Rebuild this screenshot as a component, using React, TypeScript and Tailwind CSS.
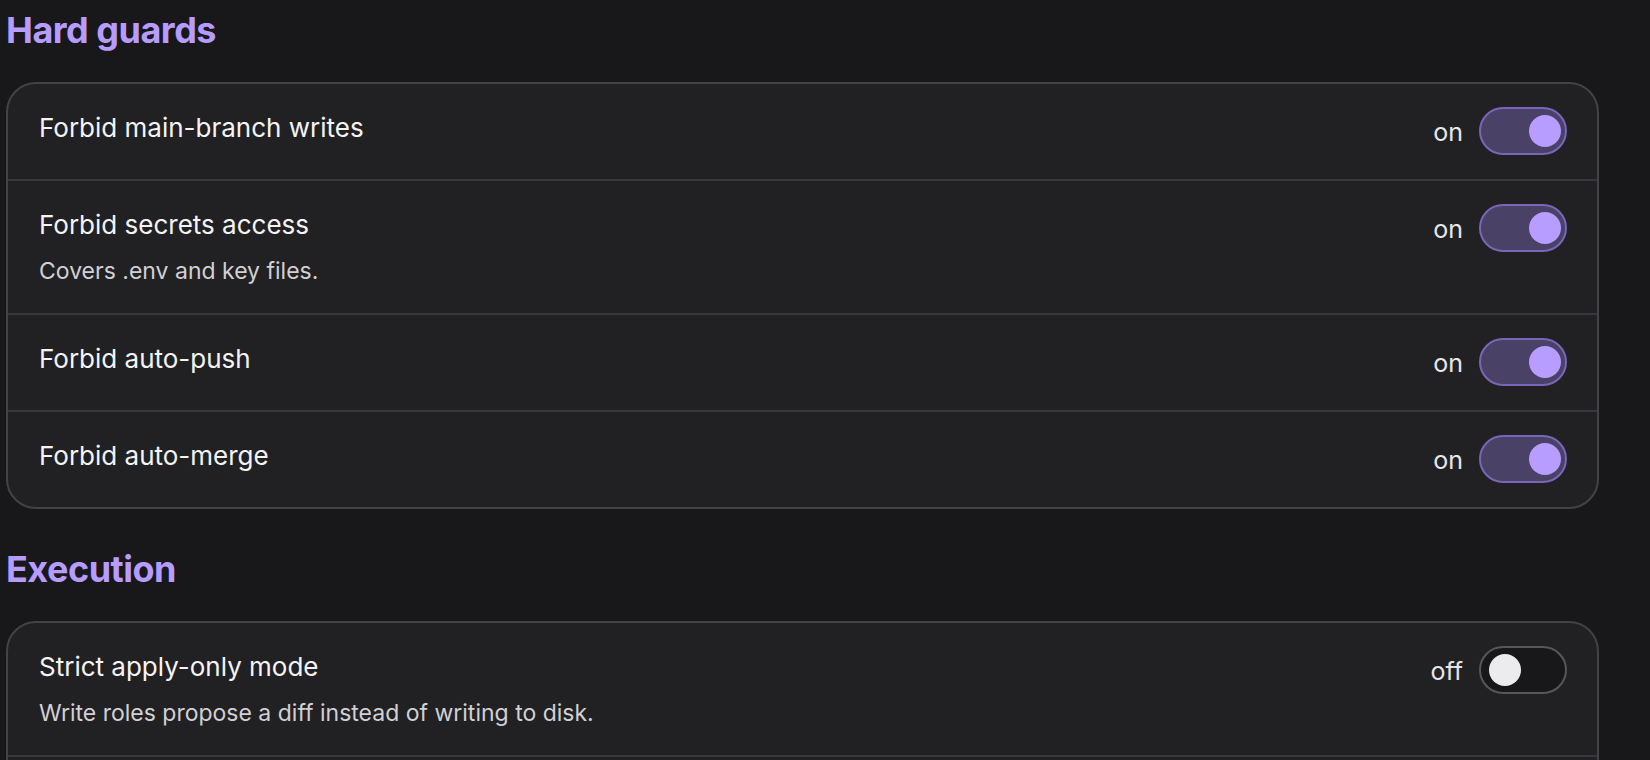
import React, { useState } from 'react';

type Setting = {
  id: string;
  label: string;
  hint?: string;
  on: boolean;
};

const HARD_GUARDS: Setting[] = [
  { id: 'main-writes', label: 'Forbid main-branch writes', on: true },
  { id: 'secrets', label: 'Forbid secrets access', hint: 'Covers .env and key files.', on: true },
  { id: 'auto-push', label: 'Forbid auto-push', on: true },
  { id: 'auto-merge', label: 'Forbid auto-merge', on: true },
];

const EXECUTION: Setting[] = [
  { id: 'apply-only', label: 'Strict apply-only mode', hint: 'Write roles propose a diff instead of writing to disk.', on: false },
  { id: 'dry-run', label: 'Dry-run shell commands', on: false },
];

const Toggle: React.FC<{ on: boolean; onChange: () => void }> = ({ on, onChange }) => (
  <div className="flex items-center gap-4 shrink-0">
    <span className="text-[25px] leading-none text-[#e6e6ea] w-[34px] text-right pt-[3px]">{on ? 'on' : 'off'}</span>
    <button
      type="button"
      onClick={onChange}
      className={
        'relative w-[88px] h-[48px] rounded-full border-2 ' +
        (on ? 'bg-[#4a4166] border-[#7a66b9]' : 'bg-[#18181b] border-[#56565b]')
      }
    >
      <span
        className={
          'absolute top-[6px] w-[32px] h-[32px] rounded-full ' +
          (on ? 'left-[48px] bg-[#b79dff]' : 'left-[8px] bg-[#ececef]')
        }
      />
    </button>
  </div>
);

const Section: React.FC<{ title: string; items: Setting[] }> = ({ title, items }) => {
  const [state, setState] = useState(items);

  return (
    <section>
      <h2 className="text-[36px] leading-[40px] font-bold text-[#b69cff] tracking-[-0.5px]">{title}</h2>
      <div className="mt-8 rounded-[30px] border-2 border-[#434347] bg-[#212123] divide-y-2 divide-[#37373b] overflow-hidden">
        {state.map((s, i) => (
          <div key={s.id} className="flex items-start justify-between pl-[31px] pr-[30px] pt-[23px] pb-[24px]">
            <div className="pt-[4px]">
              <div className="text-[26px] leading-[34px] text-[#f4f4f6]">{s.label}</div>
              {s.hint && (
                <div className="mt-[13px] mb-[2px] text-[23px] leading-[32px] text-[#d0d0d5]">{s.hint}</div>
              )}
            </div>
            <Toggle
              on={s.on}
              onChange={() => setState((prev) => prev.map((p, j) => (j === i ? { ...p, on: !p.on } : p)))}
            />
          </div>
        ))}
      </div>
    </section>
  );
};

export default function App() {
  return (
    <div
      className="min-h-screen bg-[#18181b] pl-[6px] pr-[51px] pt-[10px] pb-10"
      style={{ fontFamily: 'Inter, "Liberation Sans", sans-serif' }}
    >
      <div className="flex flex-col gap-[40px]">
        <Section title="Hard guards" items={HARD_GUARDS} />
        <Section title="Execution" items={EXECUTION} />
      </div>
    </div>
  );
}
